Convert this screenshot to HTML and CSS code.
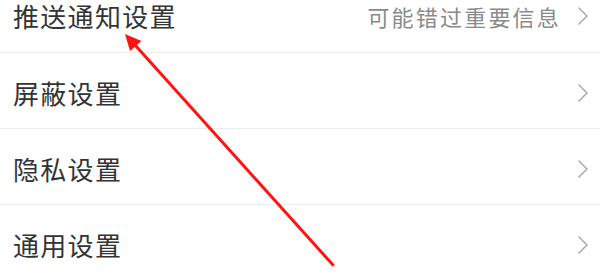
FILE: index.html
```html
<!DOCTYPE html>
<html lang="zh">
<head>
<meta charset="utf-8">
<link rel="stylesheet" href="styles.css">
</head>
<body>
<div class="screen">
  <ul class="list">
    <li class="row first">
      <span class="label">推送通知设置</span>
      <span class="hint">可能错过重要信息</span>
      <svg class="chev" viewBox="0 0 10 18" width="10" height="18"><path d="M1 1 L9 9 L1 17" fill="none" stroke="#ababab" stroke-width="1.6" stroke-linejoin="round" stroke-linecap="round"/></svg>
    </li>
    <li class="row">
      <span class="label">屏蔽设置</span>
      <svg class="chev" viewBox="0 0 10 18" width="10" height="18"><path d="M1 1 L9 9 L1 17" fill="none" stroke="#ababab" stroke-width="1.6" stroke-linejoin="round" stroke-linecap="round"/></svg>
    </li>
    <li class="row">
      <span class="label">隐私设置</span>
      <svg class="chev" viewBox="0 0 10 18" width="10" height="18"><path d="M1 1 L9 9 L1 17" fill="none" stroke="#ababab" stroke-width="1.6" stroke-linejoin="round" stroke-linecap="round"/></svg>
    </li>
    <li class="row">
      <span class="label">通用设置</span>
      <svg class="chev" viewBox="0 0 10 18" width="10" height="18"><path d="M1 1 L9 9 L1 17" fill="none" stroke="#ababab" stroke-width="1.6" stroke-linejoin="round" stroke-linecap="round"/></svg>
    </li>
  </ul>
  <svg class="arrow" viewBox="0 0 600 277" width="600" height="277">
    <line x1="333" y1="265" x2="135" y2="45" stroke="#ff1414" stroke-width="3" stroke-linecap="round"/>
    <polygon points="125,34 141.5,41 130,51" fill="#ff1414"/>
  </svg>
</div>
</body>
</html>
```
FILE: styles.css
```css
html, body {
  margin: 0;
  padding: 0;
  background: #ffffff;
}
body {
  width: 600px;
  height: 277px;
  overflow: hidden;
  font-family: "Noto Sans CJK SC", "Noto Sans", sans-serif;
}
.screen {
  position: relative;
  width: 600px;
  height: 277px;
  overflow: hidden;
}
.list {
  list-style: none;
  margin: 0;
  padding: 0;
}
.row {
  display: flex;
  align-items: center;
  box-sizing: border-box;
  height: 76px;
  padding: 4px 12px 0 13px;
  border-bottom: 1px solid #ececec;
}
.row.first {
  height: 53px;
  padding-top: 0;
  padding-bottom: 20px;
}
.label {
  flex: 1;
  font-size: 26px;
  letter-spacing: 1.3px;
  color: #333333;
  line-height: 1;
}
.hint {
  font-size: 22px;
  letter-spacing: 2.2px;
  color: #8a8a8a;
  line-height: 1;
  margin-right: 17px;
}
.chev {
  display: block;
  flex: none;
}
.arrow {
  position: absolute;
  left: 0;
  top: 0;
  pointer-events: none;
}
```
